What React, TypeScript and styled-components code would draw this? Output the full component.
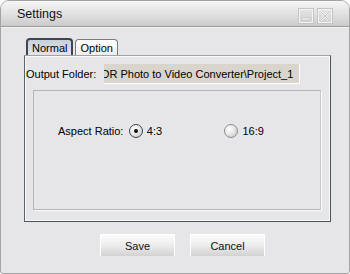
import React from "react";
import styled, { createGlobalStyle } from "styled-components";

const Global = createGlobalStyle`
  html, body { margin: 0; padding: 0; background: #ffffff; }
  * { box-sizing: border-box; }
`;

const Window = styled.div`
  width: 350px;
  height: 274px;
  display: flex;
  flex-direction: column;
  background: #e6e6e8;
  border: 1px solid #a4a4a6;
  border-radius: 9px 9px 3px 3px;
  overflow: hidden;
  font-family: "Liberation Sans", Arial, sans-serif;
  color: #000;
`;

const TitleBar = styled.div`
  height: 26px;
  flex: none;
  display: flex;
  align-items: center;
  justify-content: space-between;
  padding: 0 16px 0 16px;
  background: linear-gradient(#f6f6f6 0%, #e2e2e2 50%, #cacaca 100%);
  border-bottom: 1px solid #9c9c9c;
  box-shadow: 0 1px 0 #f4f4f4;
`;

const Title = styled.span`
  font-size: 12.5px;
  color: #111;
  padding-top: 1px;
`;

const WinButtons = styled.div`
  display: flex;
  gap: 3px;
  padding-top: 4px;
`;

const WinButton = styled.div`
  width: 16px;
  height: 16px;
  border: 1px solid #c4c4c4;
  box-shadow: inset 0 0 0 1px #f4f4f4;
  background: linear-gradient(#e4e4e4, #d0d0d0);
  display: flex;
  align-items: center;
  justify-content: center;
`;

const Body = styled.div`
  flex: 1;
  display: flex;
  flex-direction: column;
  padding: 11px 18px 0 23px;
`;

const Tabs = styled.div`
  display: flex;
  align-items: flex-end;
  gap: 2px;
  padding-left: 2px;
  height: 17px;
`;

const Tab = styled.div<{ $active?: boolean }>`
  height: ${(p) => (p.$active ? "17px" : "16px")};
  padding: 0 4px;
  display: flex;
  align-items: center;
  font-size: 11px;
  border-radius: 4px 4px 0 0;
  border: ${(p) => (p.$active ? "2px solid #3e4654" : "1px solid #7c7c80")};
  border-bottom: none;
  background: ${(p) =>
    p.$active ? "linear-gradient(#c9d0d8, #e2e4e8)" : "linear-gradient(#ffffff, #eeeeee)"};
  color: #000;
`;

const Panel = styled.div`
  height: 167px;
  display: flex;
  flex-direction: column;
  border-top: 1px solid #a2a2a4;
  border-left: 1px solid #5c626c;
  border-right: 1px solid #4c5462;
  border-bottom: 1px solid #4c5462;
  box-shadow: inset 1px 1px 0 #fafafa, inset -1px -1px 0 #fafafa;
  padding: 0 9px 11px 8px;
`;

const FolderRow = styled.div`
  display: flex;
  align-items: center;
  height: 34px;
  margin-left: -7px;
  padding-top: 2px;
`;

const Label = styled.span`
  font-size: 11px;
  white-space: nowrap;
`;

const PathField = styled.div`
  margin-left: 8px;
  width: 196px;
  height: 20px;
  background: #d9d5cd;
  border-right: 1px solid #ffffff;
  border-bottom: 1px solid #ffffff;
  display: flex;
  justify-content: flex-end;
  align-items: center;
  overflow: hidden;
  padding-right: 6px;
  font-size: 11px;
  white-space: nowrap;
`;

const InnerPanel = styled.div`
  flex: 1;
  border-top: 1px solid #b4b4b6;
  border-left: 1px solid #b4b4b6;
  border-right: 1px solid #c8c8ca;
  border-bottom: 1px solid #b4b4b6;
  box-shadow: 1px 1px 0 #fafafa;
  display: flex;
  flex-direction: column;
  padding: 33px 0 0 24px;
`;

const RatioRow = styled.div`
  display: flex;
  align-items: center;
`;

const RatioLabel = styled(Label)`
  width: 77px;
`;

const RadioOption = styled.label<{ $width?: number }>`
  display: flex;
  align-items: center;
  gap: 4px;
  font-size: 11px;
  width: ${(p) => p.$width ?? 104}px;
`;

const RadioDot = styled.span<{ $checked?: boolean }>`
  width: 14px;
  height: 14px;
  border-radius: 50%;
  border: 1px solid ${(p) => (p.$checked ? "#3c4656" : "#8c8c90")};
  background: radial-gradient(circle at 35% 35%, #ffffff 0%, #e8e8e8 45%, #bcbcbc 100%);
  display: flex;
  align-items: center;
  justify-content: center;
  &::after {
    content: "";
    width: 4px;
    height: 4px;
    border-radius: 50%;
    background: #111;
    display: ${(p) => (p.$checked ? "block" : "none")};
  }
`;

const ButtonRow = styled.div`
  display: flex;
  gap: 15px;
  padding: 12px 0 0 76px;
`;

const Button = styled.div`
  width: 75px;
  height: 23px;
  display: flex;
  align-items: center;
  justify-content: center;
  font-size: 11px;
  color: #111;
  background: linear-gradient(#fbfbfb 0%, #eeeeee 45%, #d2d2d2 100%);
  border-top: 1px solid #ffffff;
  border-left: 1px solid #ffffff;
  border-right: 1px solid #ffffff;
  border-bottom: 1px solid #e6e6e8;
`;

export default function App() {
  return (
    <>
      <Global />
      <Window>
        <TitleBar>
          <Title>Settings</Title>
          <WinButtons>
            <WinButton>
              <svg width="10" height="10" viewBox="0 0 10 10">
                <rect x="1" y="7" width="8" height="2" fill="#f6f6f6" stroke="#b8b8b8" strokeWidth="0.6" />
              </svg>
            </WinButton>
            <WinButton>
              <svg width="10" height="10" viewBox="0 0 10 10">
                <path d="M1 1 L9 9 M9 1 L1 9" stroke="#f4f4f4" strokeWidth="2" />
                <path d="M1 1 L9 9 M9 1 L1 9" stroke="#b4b4b4" strokeWidth="0.8" />
              </svg>
            </WinButton>
          </WinButtons>
        </TitleBar>
        <Body>
          <Tabs>
            <Tab $active>Normal</Tab>
            <Tab>Option</Tab>
          </Tabs>
          <Panel>
            <FolderRow>
              <Label>Output Folder:</Label>
              <PathField>DR Photo to Video Converter\Project_1</PathField>
            </FolderRow>
            <InnerPanel>
              <RatioRow>
                <RatioLabel>Aspect Ratio:</RatioLabel>
                <RadioOption>
                  <RadioDot $checked />
                  4:3
                </RadioOption>
                <RadioOption>
                  <RadioDot />
                  16:9
                </RadioOption>
              </RatioRow>
            </InnerPanel>
          </Panel>
          <ButtonRow>
            <Button>Save</Button>
            <Button>Cancel</Button>
          </ButtonRow>
        </Body>
      </Window>
    </>
  );
}
